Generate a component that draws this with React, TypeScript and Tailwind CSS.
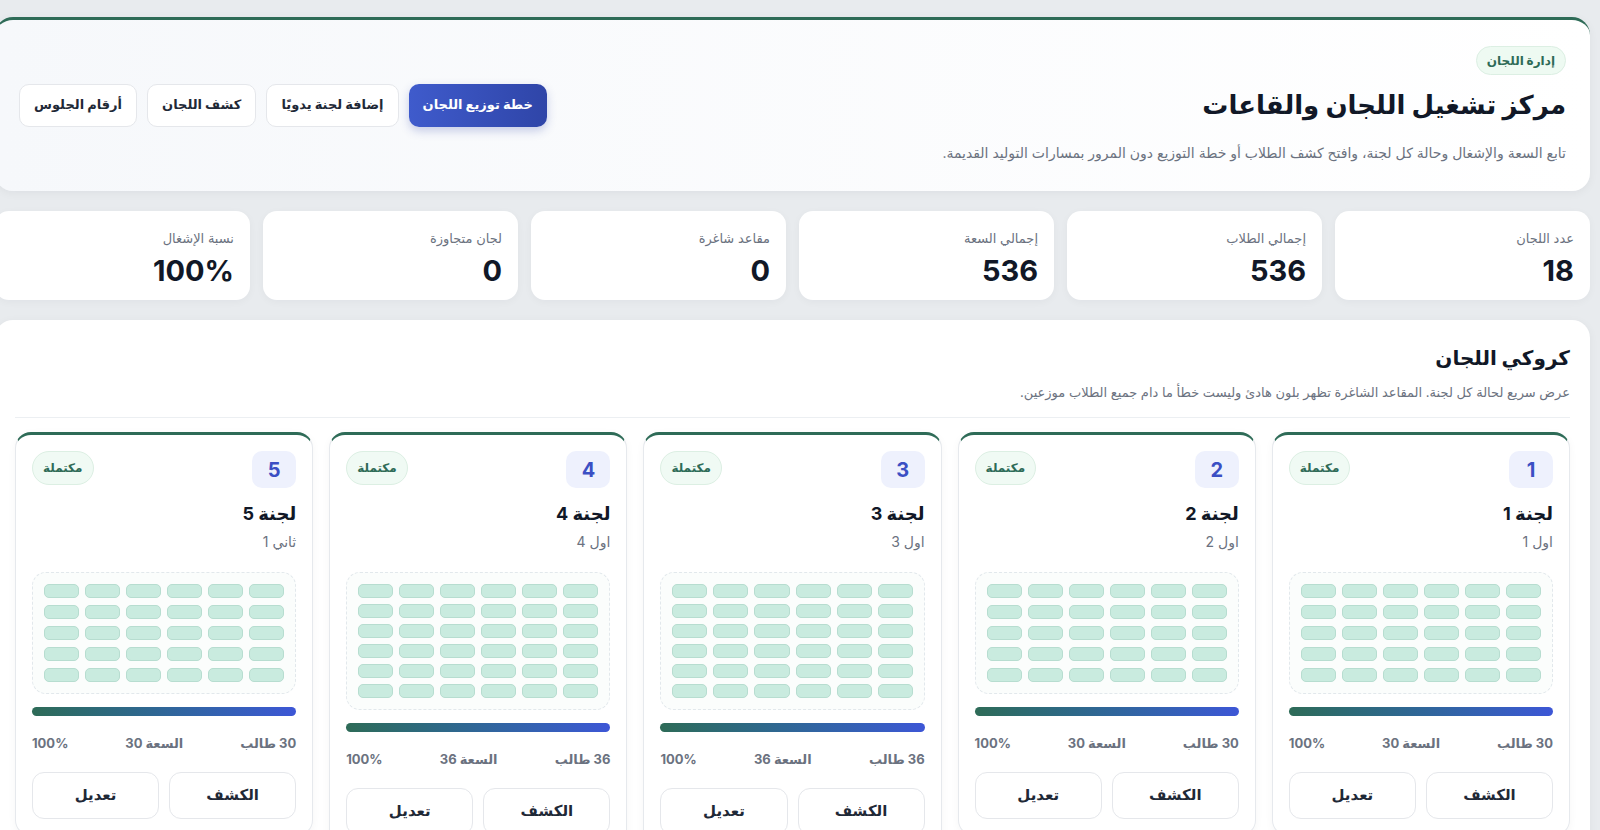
import React from "react";

const stats = [
  { label: "عدد اللجان", value: "18" },
  { label: "إجمالي الطلاب", value: "536" },
  { label: "إجمالي السعة", value: "536" },
  { label: "مقاعد شاغرة", value: "0" },
  { label: "لجان متجاوزة", value: "0" },
  { label: "نسبة الإشغال", value: "100%" },
];

const committees = [
  { id: 1, title: "لجنة 1", group: "اول 1", seats: 30 },
  { id: 2, title: "لجنة 2", group: "اول 2", seats: 30 },
  { id: 3, title: "لجنة 3", group: "اول 3", seats: 36 },
  { id: 4, title: "لجنة 4", group: "اول 4", seats: 36 },
  { id: 5, title: "لجنة 5", group: "ثاني 1", seats: 30 },
];

const CommitteeCard = ({ c }: { c: (typeof committees)[number] }) => (
  <div className="flex flex-col rounded-[16px] border border-[#e6e9ed] border-t-[3px] border-t-[#2e6b57] bg-white px-4 pb-4 pt-4 shadow-[0_2px_8px_rgba(15,23,42,0.04)]">
    <div className="flex items-start justify-between">
      <span className="flex h-[37px] w-[44px] items-center justify-center rounded-[10px] bg-[#eef1fd] text-[20px] font-bold text-[#3b4fc4]">
        {c.id}
      </span>
      <span className="flex h-[34px] items-center rounded-full border border-[#dcefe3] bg-[#f0faf4] px-[10px] text-[12px] font-bold text-[#2e6b57]">
        مكتملة
      </span>
    </div>
    <h3 className="mt-[13px] text-[18px] font-bold leading-[26px] text-[#111827]">{c.title}</h3>
    <p className="mt-[5px] text-[14px] leading-[20px] text-[#6b7280]">{c.group}</p>

    <div className="mt-[20px] rounded-[14px] border border-dashed border-[#e2e8ec] bg-[#fbfdfc] p-[11px]">
      <div
        className={
          c.seats > 30
            ? "grid grid-cols-6 gap-x-[6px] gap-y-[6px]"
            : "grid grid-cols-6 gap-x-[6px] gap-y-[7px]"
        }
      >
        {Array.from({ length: c.seats }).map((_, i) => (
          <span
            key={i}
            className="h-[14px] rounded-[5px] border border-[#b7ddd0] bg-[#c9ebdf]"
          />
        ))}
      </div>
    </div>

    <div className="mt-[13px] h-[9px] rounded-full bg-linear-to-r from-[#2e6b57] to-[#3d56d6]" />

    <div className="mt-[18px] flex items-center justify-between text-[13px] font-bold leading-[18px] text-[#6b7280]">
      <span>{c.seats} طالب</span>
      <span>السعة {c.seats}</span>
      <span>100%</span>
    </div>

    <div className="mt-[20px] grid grid-cols-2 gap-[10px]">
      <button className="h-[47px] rounded-[12px] border border-[#e5e7eb] bg-white text-[15px] font-bold text-[#1f2937]">
        الكشف
      </button>
      <button className="h-[47px] rounded-[12px] border border-[#e5e7eb] bg-white text-[15px] font-bold text-[#1f2937]">
        تعديل
      </button>
    </div>
  </div>
);

export default function App() {
  return (
    <div
      dir="rtl"
      className="min-h-screen overflow-hidden bg-[#e8ebee] font-['Inter','DejaVu_Sans',sans-serif]"
    >
      <div className="mr-[10px] flex w-[1595px] flex-col gap-5 pb-6 pt-[17px]">
        {/* header */}
        <section className="flex items-center justify-between rounded-[18px] border-t-[3px] border-[#2e6b57] bg-linear-to-l from-white to-[#f6f8fb] px-6 pb-[27px] pt-[26px] shadow-[0_2px_10px_rgba(15,23,42,0.05)]">
          <div className="flex flex-col items-start">
            <span className="flex h-[29px] items-center rounded-full border border-[#dcefe3] bg-[#eefaf2] px-[10px] text-[12px] font-bold text-[#2e6b57]">
              إدارة اللجان
            </span>
            <h1 className="mt-[10px] text-[26px] font-bold leading-[40px] text-[#111827]">
              مركز تشغيل اللجان والقاعات
            </h1>
            <p className="mt-[17px] text-[14px] leading-[22px] text-[#6b7280]">
              تابع السعة والإشغال وحالة كل لجنة، وافتح كشف الطلاب أو خطة التوزيع دون المرور بمسارات التوليد القديمة.
            </p>
          </div>
          <div className="flex items-center gap-[10px]">
            <button className="h-[43px] rounded-[10px] bg-linear-to-l from-[#2f45a8] to-[#3f5bcc] px-[14px] text-[13px] font-bold text-white shadow-[0_4px_10px_rgba(47,69,168,0.25)]">
              خطة توزيع اللجان
            </button>
            <button className="h-[43px] rounded-[10px] border border-[#e5e7eb] bg-white px-[14px] text-[13px] font-bold text-[#1f2937]">
              إضافة لجنة يدويًا
            </button>
            <button className="h-[43px] rounded-[10px] border border-[#e5e7eb] bg-white px-[14px] text-[13px] font-bold text-[#1f2937]">
              كشف اللجان
            </button>
            <button className="h-[43px] rounded-[10px] border border-[#e5e7eb] bg-white px-[14px] text-[13px] font-bold text-[#1f2937]">
              أرقام الجلوس
            </button>
          </div>
        </section>

        {/* stats */}
        <div className="grid grid-cols-6 gap-[13px]">
          {stats.map((s) => (
            <div
              key={s.label}
              className="h-[89px] rounded-[14px] bg-white px-4 pt-[17px] shadow-[0_2px_8px_rgba(15,23,42,0.04)]"
            >
              <div className="text-[13px] leading-[20px] text-[#6b7280]">{s.label}</div>
              <div className="mt-[6px] text-[29px] font-bold leading-[34px] text-[#111827]">{s.value}</div>
            </div>
          ))}
        </div>

        {/* committees map */}
        <section className="rounded-[18px] bg-white px-5 pb-6 pt-6 shadow-[0_2px_10px_rgba(15,23,42,0.05)]">
          <h2 className="text-[20px] font-bold leading-[28px] text-[#111827]">كروكي اللجان</h2>
          <p className="mt-[10px] text-[13px] leading-[20px] text-[#6b7280]">
            عرض سريع لحالة كل لجنة. المقاعد الشاغرة تظهر بلون هادئ وليست خطأ ما دام جميع الطلاب موزعين.
          </p>
          <div className="mt-[15px] border-t border-[#eceff2]" />
          <div className="mt-[14px] grid grid-cols-5 items-start gap-4">
            {committees.map((c) => (
              <CommitteeCard key={c.id} c={c} />
            ))}
          </div>
        </section>
      </div>
    </div>
  );
}
